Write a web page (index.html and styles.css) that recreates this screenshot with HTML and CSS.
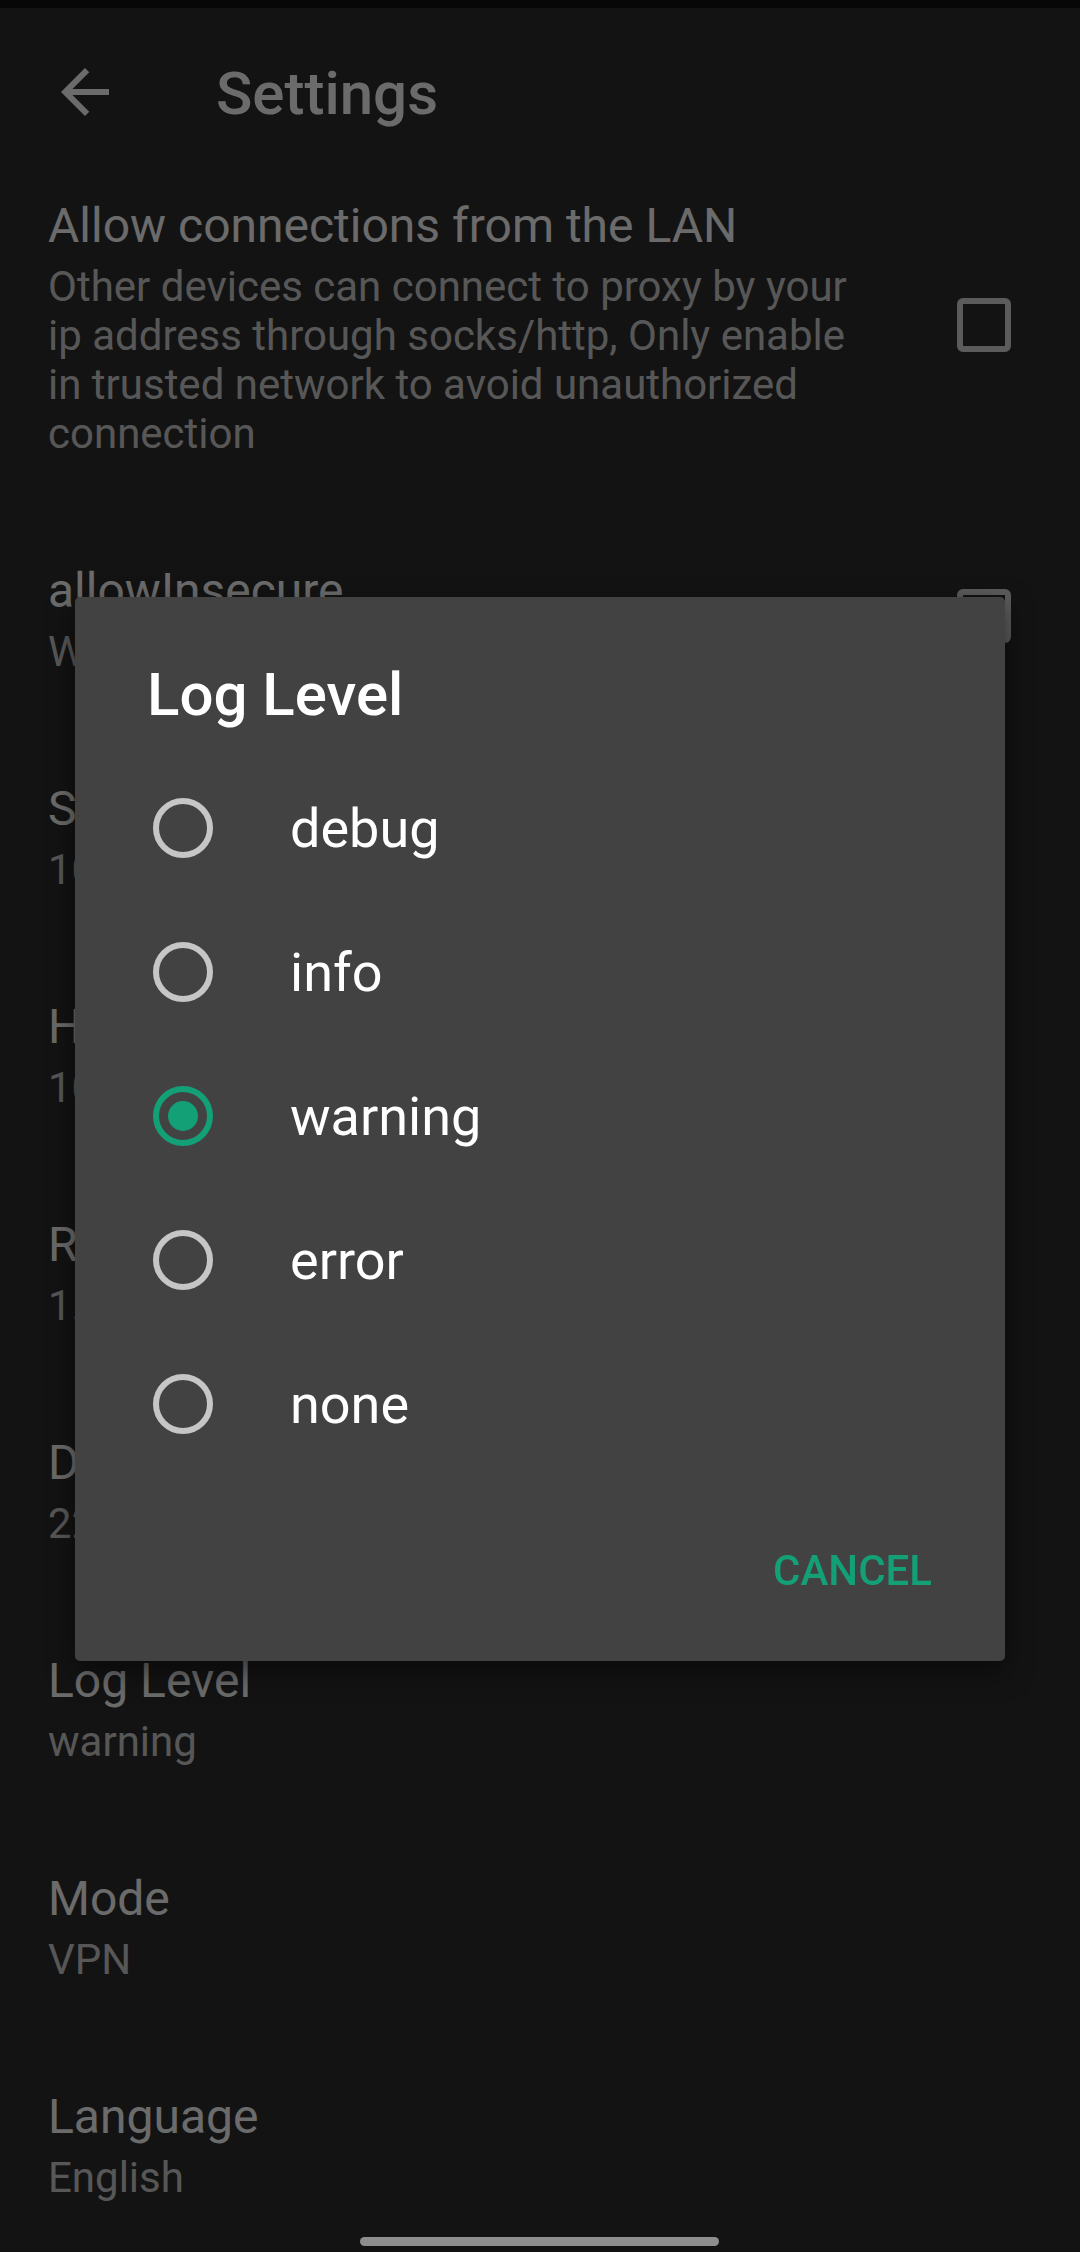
FILE: index.html
```html
<!DOCTYPE html>
<html lang="en">
  <head>
    <meta charset="UTF-8" />
    <meta name="viewport" content="width=device-width, initial-scale=1.0"/>
    <title>Settings</title>
    <link rel="stylesheet" href="styles.css">
  </head>
  <body>
    <div class="statusbar"></div>
    <header class="toolbar">
      <svg class="back" viewBox="0 0 24 24" aria-label="Back">
        <path d="M20 11H7.83l5.59-5.59L12 4l-8 8 8 8 1.41-1.41L7.83 13H20v-2z"/>
      </svg>
      <h1>Settings</h1>
    </header>

    <main class="prefs">
      <div class="pref">
        <div class="pref-text">
          <div class="pref-title">Allow connections from the LAN</div>
          <div class="pref-summary">Other devices can connect to proxy by your ip address through socks/http, Only enable in trusted network to avoid unauthorized connection</div>
        </div>
        <span class="checkbox"></span>
      </div>
      <div class="pref">
        <div class="pref-text">
          <div class="pref-title">allowInsecure</div>
          <div class="pref-summary">When TLS, allow insecure</div>
        </div>
        <span class="checkbox"></span>
      </div>
      <div class="pref">
        <div class="pref-text">
          <div class="pref-title">SOCKS5 proxy port</div>
          <div class="pref-summary">10808</div>
        </div>
      </div>
      <div class="pref">
        <div class="pref-text">
          <div class="pref-title">HTTP proxy port</div>
          <div class="pref-summary">10809</div>
        </div>
      </div>
      <div class="pref">
        <div class="pref-text">
          <div class="pref-title">Remote DNS</div>
          <div class="pref-summary">1.1.1.1</div>
        </div>
      </div>
      <div class="pref">
        <div class="pref-text">
          <div class="pref-title">Domestic DNS</div>
          <div class="pref-summary">223.5.5.5</div>
        </div>
      </div>
      <div class="pref">
        <div class="pref-text">
          <div class="pref-title">Log Level</div>
          <div class="pref-summary">warning</div>
        </div>
      </div>
      <div class="pref">
        <div class="pref-text">
          <div class="pref-title">Mode</div>
          <div class="pref-summary">VPN</div>
        </div>
      </div>
      <div class="pref">
        <div class="pref-text">
          <div class="pref-title">Language</div>
          <div class="pref-summary">English</div>
        </div>
      </div>
    </main>

    <div class="scrim"></div>

    <div class="dialog">
      <h2 class="dialog-title">Log Level</h2>
      <ul class="choices">
        <li class="choice"><span class="radio"></span>debug</li>
        <li class="choice"><span class="radio"></span>info</li>
        <li class="choice"><span class="radio checked"></span>warning</li>
        <li class="choice"><span class="radio"></span>error</li>
        <li class="choice"><span class="radio"></span>none</li>
      </ul>
      <div class="dialog-buttons">
        <button class="text-btn">CANCEL</button>
      </div>
    </div>

    <div class="home-bar"></div>
  </body>
</html>
```

FILE: styles.css
```css
body {
  margin: 0;
  width: 1080px;
  height: 2252px;
  overflow: hidden;
  background-color: #2e2e2e;
  font-family: Roboto, "Noto Sans", sans-serif;
  color: #ffffff;
}

.statusbar {
  height: 8px;
  background-color: #121212;
}

.toolbar {
  position: relative;
  z-index: 1;
  height: 168px;
  display: flex;
  align-items: center;
  padding-left: 49px;
  background-color: #2e2e2e;
}

.back {
  width: 72px;
  height: 72px;
  fill: #ffffff;
}

.toolbar h1 {
  margin: 0 0 0 95px;
  font-size: 60px;
  font-weight: 500;
  line-height: 70px;
  position: relative;
  top: 2px;
}

/* list is scrolled a little under the app bar */
.prefs {
  margin-top: -32px;
}

.pref {
  display: flex;
  align-items: center;
  padding: 54px 0 51px 48px;
}

.pref-text {
  width: 827px;
}

.pref-title {
  font-size: 48px;
  line-height: 56px;
}

.pref-summary {
  margin-top: 8px;
  font-size: 42px;
  line-height: 49px;
  color: #d0d0d0;
}

.checkbox {
  box-sizing: border-box;
  width: 54px;
  height: 54px;
  margin: 0 69px 7px auto;
  border: 6px solid #d8d8d8;
  border-radius: 6px;
}

.scrim {
  position: fixed;
  inset: 0;
  z-index: 2;
  background-color: rgba(0, 0, 0, 0.58);
}

.dialog {
  position: absolute;
  z-index: 3;
  left: 75px;
  top: 597px;
  width: 930px;
  height: 1064px;
  box-sizing: border-box;
  padding-top: 63px;
  background-color: #424242;
  border-radius: 5px;
  box-shadow: 0 10px 28px rgba(0, 0, 0, 0.5);
}

.dialog-title {
  margin: 0 0 26px 72px;
  font-size: 60px;
  font-weight: 500;
  line-height: 70px;
}

.choices {
  list-style: none;
  margin: 0;
  padding: 0;
}

.choice {
  height: 144px;
  display: flex;
  align-items: center;
  padding-left: 78px;
  font-size: 54px;
  line-height: 63px;
}

.radio {
  box-sizing: border-box;
  width: 60px;
  height: 60px;
  margin-right: 77px;
  border: 6.5px solid #c6c6c6;
  border-radius: 50%;
  display: flex;
  align-items: center;
  justify-content: center;
}

.radio.checked {
  border-color: #14a077;
}

.radio.checked::after {
  content: "";
  width: 30px;
  height: 30px;
  border-radius: 50%;
  background-color: #14a077;
}

.dialog-buttons {
  display: flex;
  justify-content: flex-end;
  margin-top: 70px;
  padding-right: 73px;
}

.text-btn {
  padding: 0;
  border: none;
  background: none;
  font-family: Roboto, "Noto Sans", sans-serif;
  font-size: 42px;
  font-weight: 500;
  line-height: 49px;
  color: #14a077;
}

.home-bar {
  position: fixed;
  z-index: 3;
  left: 360px;
  top: 2237px;
  width: 359px;
  height: 9px;
  border-radius: 5px;
  background-color: #8e8e8e;
}
```
